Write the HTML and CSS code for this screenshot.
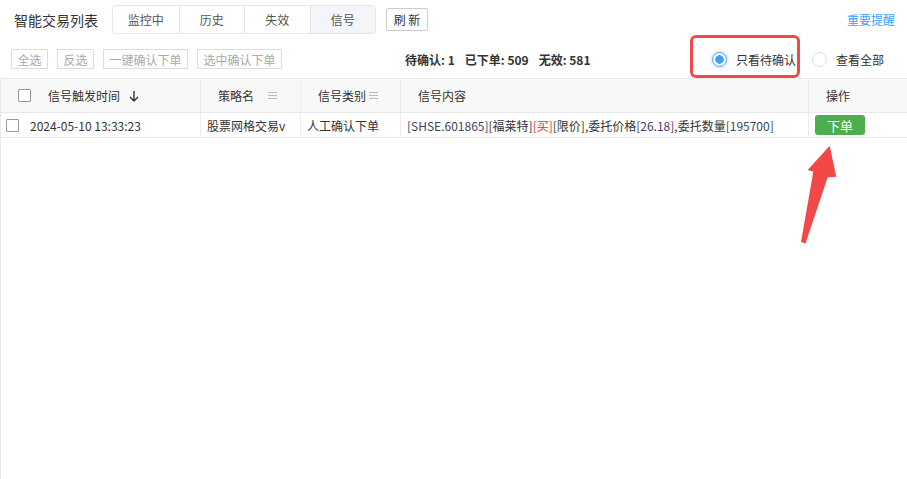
FILE: index.html
```html
<!DOCTYPE html>
<html lang="zh-CN">
<head>
    <meta charset="UTF-8">
    <meta name="viewport" content="width=device-width, initial-scale=1.0">
    <title>智能交易列表</title>
    <link rel="stylesheet" href="styles.css">
</head>
<body>
    <div class="topbar">
        <span class="title">智能交易列表</span>
        <div class="tabs">
            <span class="tab">监控中</span>
            <span class="tab">历史</span>
            <span class="tab">失效</span>
            <span class="tab active">信号</span>
        </div>
        <button class="refresh">刷 新</button>
        <a class="notice">重要提醒</a>
    </div>

    <div class="toolbar">
        <div class="actions">
            <button class="btn">全选</button>
            <button class="btn">反选</button>
            <button class="btn">一键确认下单</button>
            <button class="btn">选中确认下单</button>
        </div>
        <div class="counts">
            <span>待确认: 1</span>
            <span>已下单: 509</span>
            <span>无效: 581</span>
        </div>
        <div class="filters">
            <label class="radio checked marked"><i class="dot"></i>只看待确认</label>
            <label class="radio"><i class="dot"></i>查看全部</label>
        </div>
    </div>

    <div class="grid">
        <div class="row head">
            <div class="cell first">
                <i class="check"></i>
                <span>信号触发时间</span>
                <svg class="sort" width="10" height="12" viewBox="0 0 10 12"><path d="M5 1v10M1 7l4 4 4-4" fill="none" stroke="#333" stroke-width="1.4"/></svg>
            </div>
            <div class="cell">策略名 <i class="menu"></i></div>
            <div class="cell">信号类别<i class="menu tight"></i></div>
            <div class="cell">信号内容</div>
            <div class="cell">操作</div>
        </div>
        <div class="row body">
            <div class="cell first">
                <i class="check"></i>
                <span>2024-05-10 13:33:23</span>
            </div>
            <div class="cell">股票网格交易v</div>
            <div class="cell">人工确认下单</div>
            <div class="cell"><span class="code">[SHSE.601865]</span>[福莱特]<span class="buy">[买]</span>[限价],委托价格<span class="num">[26.18]</span>,委托数量<span class="code">[195700]</span></div>
            <div class="cell"><button class="order">下单</button></div>
        </div>
    </div>

    <svg class="pointer" width="907" height="479" viewBox="0 0 907 479">
        <polygon points="829.7,145.7 836.3,176.7 827.7,177.3 805.5,243.5 801,242 813.3,171.7 807.7,170" fill="#f34848"/>
    </svg>
</body>
</html>
```

FILE: styles.css
```css
* {
    box-sizing: border-box;
}
body {
    margin: 0;
    height: 100vh;
    display: flex;
    flex-direction: column;
    font-family: "Noto Sans CJK SC", "Noto Sans", sans-serif;
    font-size: 12px;
    color: #333;
    background: #fff;
    position: relative;
    overflow: hidden;
}
.topbar {
    display: flex;
    align-items: center;
    padding: 5px 12px 0 14px;
    height: 34px;
}
.title {
    font-size: 14px;
    margin-right: 14px;
}
.tabs {
    display: flex;
    height: 29px;
    border: 1px solid #e2e5ea;
    border-radius: 4px;
    overflow: hidden;
}
.tab {
    width: 65.5px;
    display: flex;
    align-items: center;
    justify-content: center;
    color: #555;
    border-left: 1px solid #e4e7ed;
}
.tab:first-child {
    border-left: none;
}
.tab.active {
    background: #f3f5f8;
}
.refresh {
    margin-left: 10px;
    width: 42px;
    height: 23px;
    padding: 0;
    font: inherit;
    color: #333;
    background: #fff;
    border: 1px solid #ccc;
    border-radius: 2px;
}
.notice {
    margin-left: auto;
    color: #409eff;
}
.toolbar {
    display: flex;
    align-items: center;
    padding: 15px 23px 9px 11px;
    height: 44px;
}
.actions {
    display: flex;
    gap: 9px;
}
.btn {
    height: 20px;
    padding: 0 5.5px;
    font: inherit;
    color: #aaa;
    background: #fff;
    border: 1px solid #ddd;
    border-radius: 0;
}
.counts {
    margin-left: 123px;
    font-weight: bold;
    display: flex;
    gap: 10px;
}
.filters {
    margin-left: auto;
    display: flex;
    align-items: center;
    gap: 16px;
}
.radio {
    position: relative;
    display: flex;
    align-items: center;
    height: 18px;
    color: #333;
}
.dot {
    width: 15px;
    height: 15px;
    margin-right: 9px;
    border: 1px solid #dcdfe6;
    border-radius: 50%;
    background: #fff;
}
.radio.checked .dot {
    border-color: #409eff;
    background: radial-gradient(circle, #409eff 0 4px, #fff 4.5px);
    box-shadow: 0 0 0 2px #e6f1fe;
}
.radio.marked::before {
    content: "";
    position: absolute;
    left: -22px;
    right: -4px;
    top: -15px;
    bottom: -10px;
    border: 3px solid #f34848;
    border-radius: 6px;
}
.grid {
    flex: 1;
    border-left: 1px solid #e8e8e8;
    border-top: 1px solid #ebebeb;
}
.row {
    display: grid;
    grid-template-columns: 199px 100px 100px 408px 1fr;
    border-bottom: 1px solid #e8e8e8;
}
.row.head {
    height: 34px;
    background: #f8f8f8;
}
.row.body {
    height: 25px;
}
.cell {
    display: flex;
    align-items: center;
    border-left: 1px solid #ececec;
    white-space: nowrap;
    overflow: hidden;
}
.head .cell {
    padding-left: 17px;
}
.body .cell {
    padding-left: 6px;
}
.cell.first {
    border-left: none;
}
.check {
    width: 13px;
    height: 13px;
    border: 1px solid #999;
    border-radius: 1px;
    background: #fff;
}
.head .check {
    margin-right: 17px;
}
.body .check {
    margin-right: 11px;
}
.body .first {
    padding-left: 5px;
}
.sort {
    margin-left: 9px;
}
.menu {
    width: 9px;
    height: 7px;
    margin-left: 14px;
    border-top: 1px solid #bbb;
    border-bottom: 1px solid #bbb;
    background: linear-gradient(#bbb, #bbb) center / 100% 1px no-repeat;
}
.menu.tight {
    margin-left: 3px;
}
.code {
    color: #3a4660;
}
.buy {
    color: #e8302a;
}
.num {
    color: #4a3a6a;
}
.order {
    height: 20px;
    width: 50px;
    padding: 0;
    font: inherit;
    font-size: 13px;
    color: #fff;
    background: #4cae4c;
    border: none;
    border-radius: 3px;
}
.pointer {
    position: absolute;
    left: 0;
    top: 0;
    pointer-events: none;
}
```
